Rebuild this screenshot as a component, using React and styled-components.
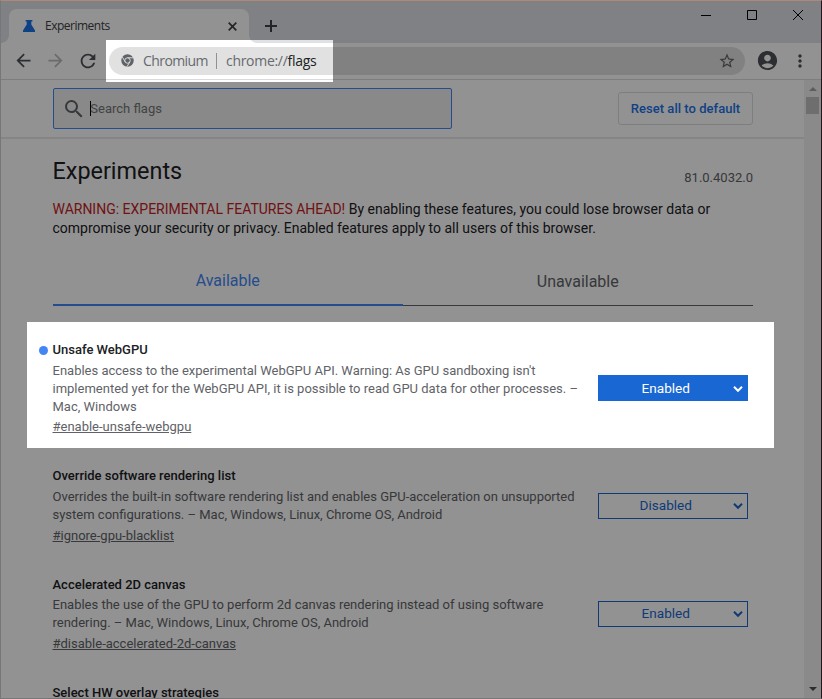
import React from "react";
import styled, { createGlobalStyle } from "styled-components";
import { MdSearch, MdStarBorder, MdAccountCircle, MdMoreVert, MdArrowBack, MdArrowForward, MdRefresh } from "react-icons/md";

const Global = createGlobalStyle`
  body { margin: 0; font-family: Roboto, sans-serif; font-size: 13px; color: #202124; }
  * { box-sizing: border-box; }
`;

const Window = styled.div`
  position: relative;
  width: 822px;
  height: 699px;
  display: flex;
  flex-direction: column;
  overflow: hidden;
  background: #fff;
  border: 1px solid #777;
  border-top-color: #ae8a76;
  border-right-color: #28141c;
`;

/* Dims everything except the address and the first flag. */
const Dimmer = styled.div`
  position: absolute;
  inset: -1px;
  z-index: 5;
  background: rgba(0, 0, 0, 0.427);
  pointer-events: none;
  clip-path: polygon(
    evenodd,
    0 0, 822px 0, 822px 699px, 0 699px, 0 0,
    106px 40px, 333px 40px, 333px 82px, 106px 82px, 106px 40px,
    0 0,
    27px 322px, 774px 322px, 774px 448px, 27px 448px, 27px 322px,
    0 0
  );
`;

const TabStrip = styled.div`
  display: flex;
  flex: none;
  height: 42px;
  background: #dee1e6;
`;

const Tab = styled.div`
  position: relative;
  display: flex;
  align-items: center;
  width: 240px;
  height: 34px;
  margin: 8px 0 0 8px;
  padding: 0 12px 0 14px;
  background: #fff;
  border-radius: 8px 8px 0 0;
  font: 12px/16px "Open Sans", sans-serif;
  letter-spacing: -0.5px;
  color: #3c4043;

  &::before, &::after {
    content: "";
    position: absolute;
    bottom: 0;
    width: 8px;
    height: 8px;
  }
  &::before { left: -8px; background: radial-gradient(circle at 0 0, transparent 7.5px, #fff 8.2px); }
  &::after { right: -8px; background: radial-gradient(circle at 100% 0, transparent 7.5px, #fff 8.2px); }
`;

const TabTitle = styled.span`
  flex: 1;
  margin-left: 10px;
`;

const Icon = styled.svg`
  display: block;
  flex: none;
  overflow: visible;
`;

const NewTab = styled.div`
  margin: 19px 0 0 16px;
`;

const Caption = styled.div`
  display: flex;
  gap: 36px;
  margin: 9px 18px 0 auto;
`;

const Toolbar = styled.div`
  position: relative;
  flex: none;
  display: flex;
  align-items: center;
  height: 37px;
  padding: 0 11px 1px 11px;
  border-bottom: 1px solid #dadada;
`;

const NavButton = styled.div`
  display: flex;
  width: 32px;
  padding-left: ${(p) => (p.$off ? 1 : 0.5)}px;
  color: ${(p) => (p.$off ? "#babcbe" : "#4d5156")};
`;

const Omnibox = styled.div`
  display: flex;
  align-items: center;
  width: 636px;
  height: 28px;
  margin-left: 1px;
  padding: 0 9px 0 11.5px;
  border-radius: 14px;
  background: #e1e1e1;
  font: 14px/20px "Open Sans", sans-serif;
  color: #66696d;
`;

const Origin = styled.span`
  width: 74px;
  margin-left: 9.5px;
  letter-spacing: -0.58px;
  border-right: 1px solid #8f9194;
  line-height: 16px;
`;

const Address = styled.span`
  flex: 1;
  margin-left: 9px;
  letter-spacing: -0.3px;
  b { font-weight: 400; color: #202124; }
`;

const ToolbarEnd = styled.div`
  display: flex;
  align-items: center;
  margin-left: auto;
  gap: 11px;
  color: #4d5156;
`;

const Viewport = styled.div`
  flex: 1;
  min-height: 0;
  display: flex;
`;

const Page = styled.main`
  flex: 1;
  min-width: 0;
  overflow: hidden;
`;

const Header = styled.header`
  display: flex;
  justify-content: space-between;
  align-items: flex-start;
  height: 59px;
  padding: 8px 51px 0 52px;
  border-bottom: 2px solid #e9e9e9;
`;

const Search = styled.div`
  display: flex;
  align-items: center;
  width: 399px;
  height: 41px;
  padding-left: 8px;
  border: 1px solid #4285f4;
  border-radius: 2px;
  background: #edefee;
  color: #5f6368;
`;

const Caret = styled.span`
  width: 1px;
  height: 15px;
  margin: 0 0 1px 4px;
  background: #000;
`;

const Placeholder = styled.span`
  margin: 0 0 1px -0.7px;
  color: #757575;
`;

const Reset = styled.button`
  width: 135px;
  height: 33px;
  margin-top: 4px;
  padding: 0;
  border: 1px solid #dadce0;
  border-radius: 3px;
  background: none;
  font: 500 13px Roboto, sans-serif;
  letter-spacing: 0.03px;
  white-space: nowrap;
  color: #1a73e8;
`;

const Content = styled.div`
  width: 700px;
  margin-left: 52px;
  text-indent: -0.5px;
`;

const TitleRow = styled.div`
  display: flex;
  justify-content: space-between;
  align-items: flex-start;
  height: 61px;
  padding-top: 18px;
`;

const Heading = styled.h1`
  margin: 0;
  font-size: 23.4px;
  font-weight: 400;
  line-height: 28px;
`;

const Version = styled.span`
  margin-top: 12px;
  line-height: 18px;
  color: #5f6368;
`;

const Blurb = styled.p`
  margin: 0;
  font-size: 14px;
  line-height: 19px;
  white-space: nowrap;
  em { font-style: normal; color: #c5221f; }
`;

const BlurbLine = styled.span`
  display: block;
  letter-spacing: ${(p) => p.$tracking || 0}px;
`;

const Tabs = styled.div`
  display: flex;
  height: 49px;
  margin-top: 19px;
`;

const PageTab = styled.div`
  flex: 1;
  padding-top: ${(p) => (p.$active ? 14 : 15)}px;
  text-align: center;
  font-size: 16px;
  line-height: 20px;
  color: ${(p) => (p.$active ? "#4285f4" : "#5f6368")};
  border-bottom: ${(p) => (p.$active ? "2px solid #4285f4" : "1px solid #5f6368")};
`;

const Flags = styled.div`
  padding-top: 35px;
`;

const Flag = styled.section`
  display: flex;
  align-items: flex-start;
  height: ${(p) => p.$height}px;
`;

const FlagText = styled.div`
  position: relative;
  width: 545px;
  line-height: 18px;
  white-space: nowrap;
`;

const Dot = styled.span`
  position: absolute;
  left: -14px;
  top: 5px;
  width: 9px;
  height: 9px;
  border-radius: 50%;
  background: #4285f4;
`;

const FlagName = styled.h2`
  margin: 0;
  font-size: 13px;
  font-weight: 500;
`;

const Description = styled.p`
  margin: ${(p) => p.$gap}px 0 0;
  color: #5f6368;
`;

const DescriptionLine = styled.span`
  display: block;
`;

const Permalink = styled.a`
  display: block;
  margin-top: ${(p) => p.$gap}px;
  color: #5f6368;
  text-decoration: underline;
`;

const Select = styled.div`
  display: flex;
  align-items: center;
  width: 150px;
  height: 26px;
  margin-top: ${(p) => p.$top}px;
  padding: ${(p) => (p.$filled ? "1px" : "0")} 4px ${(p) => (p.$filled ? "0" : "1px")} 0;
  border: 1px solid #1967d2;
  background: ${(p) => (p.$filled ? "#1967d2" : "transparent")};
  color: ${(p) => (p.$filled ? "#fff" : "#1967d2")};
  font-size: 13.6px;
  line-height: 18px;
`;

const SelectValue = styled.span`
  flex: 1;
  margin-bottom: 1px;
  text-align: center;
`;

const Scrollbar = styled.div`
  display: flex;
  flex-direction: column;
  align-items: center;
  width: 17px;
  padding: 7px 0 7px;
  background: #f1f1f1;
`;

const Thumb = styled.div`
  width: 13px;
  height: 17px;
  margin: 6px 0 auto;
  background: #c1c1c1;
`;

const flags = [
  {
    name: "Unsafe WebGPU", height: 126, gap: 3, linkGap: 2, top: 34, changed: true, value: "Enabled",
    lines: ["Enables access to the experimental WebGPU API. Warning: As GPU sandboxing isn't", "implemented yet for the WebGPU API, it is possible to read GPU data for other processes. –", "Mac, Windows"],
    link: "#enable-unsafe-webgpu",
  },
  {
    name: "Override software rendering list", height: 109, gap: 3, linkGap: 3, top: 26, value: "Disabled",
    lines: ["Overrides the built-in software rendering list and enables GPU-acceleration on unsupported", "system configurations. – Mac, Windows, Linux, Chrome OS, Android"],
    link: "#ignore-gpu-blacklist",
  },
  {
    name: "Accelerated 2D canvas", height: 108, gap: 2, linkGap: 3, top: 25, value: "Enabled",
    lines: ["Enables the use of the GPU to perform 2d canvas rendering instead of using software", "rendering. – Mac, Windows, Linux, Chrome OS, Android"],
    link: "#disable-accelerated-2d-canvas",
  },
  { name: "Select HW overlay strategies", height: 18, lines: [] },
];

function ChromiumLogo() {
  return (
    <Icon width="13" height="13" viewBox="0 0 24 24">
      <circle cx="12" cy="12" r="11.5" fill="#5f6368" />
      <circle cx="12" cy="12" r="5" fill="none" stroke="#e1e1e1" strokeWidth="1.7" />
      <path d="M12 7H22.5M7.7 14.5L2.5 5.5M16.3 14.5L11 23.5" stroke="#e1e1e1" strokeWidth="1.7" />
    </Icon>
  );
}

export default function App() {
  return (
    <Window>
      <Global />
      <TabStrip>
        <Tab>
          <Icon width="12" height="12" viewBox="0 0 12 12" fill="#1a73e8">
            <path d="M2.6 0h6.8v1.4H8.3v3.2L12 10.4V12H0v-1.6l3.7-5.8V1.4H2.6z" />
          </Icon>
          <TabTitle>Experiments</TabTitle>
          <Icon width="9" height="9" viewBox="0 0 9 9" stroke="#3c4043" strokeWidth="1.7">
            <path d="M.7.7l7.6 7.6M8.3.7L.7 8.3" />
          </Icon>
        </Tab>
        <NewTab>
          <Icon width="12" height="12" viewBox="0 0 12 12" stroke="#3c4043" strokeWidth="2">
            <path d="M6 0v12M0 6h12" />
          </Icon>
        </NewTab>
        <Caption>
          <Icon width="10" height="10" viewBox="0 0 10 10" stroke="#000"><path d="M0 5.5h10" /></Icon>
          <Icon width="10" height="10" viewBox="0 0 10 10" stroke="#000" fill="none"><path d="M.5.5h9v9h-9z" /></Icon>
          <Icon width="10" height="10" viewBox="0 0 10 10" stroke="#000"><path d="M0 0l10 10M10 0L0 10" /></Icon>
        </Caption>
      </TabStrip>

      <Toolbar>
        <NavButton><MdArrowBack size={21} /></NavButton>
        <NavButton $off><MdArrowForward size={21} /></NavButton>
        <NavButton><MdRefresh size={22} /></NavButton>
        <Omnibox>
          <ChromiumLogo />
          <Origin>Chromium</Origin>
          <Address>chrome://<b>flags</b></Address>
          <MdStarBorder size={18} color="#5f6368" />
        </Omnibox>
        <ToolbarEnd>
          <MdAccountCircle size={23} />
          <MdMoreVert size={20} />
        </ToolbarEnd>
      </Toolbar>

      <Viewport>
        <Page>
          <Header>
            <Search>
              <MdSearch size={24} />
              <Caret />
              <Placeholder>Search flags</Placeholder>
            </Search>
            <Reset>Reset all to default</Reset>
          </Header>
          <Content>
            <TitleRow>
              <Heading>Experiments</Heading>
              <Version>81.0.4032.0</Version>
            </TitleRow>
            <Blurb>
              <BlurbLine>
                <em>WARNING: EXPERIMENTAL FEATURES AHEAD!</em> By enabling these features, you could lose browser data or
              </BlurbLine>
              <BlurbLine $tracking={-0.01}>
                compromise your security or privacy. Enabled features apply to all users of this browser.
              </BlurbLine>
            </Blurb>
            <Tabs>
              <PageTab $active>Available</PageTab>
              <PageTab>Unavailable</PageTab>
            </Tabs>
            <Flags>
              {flags.map((f) => (
                <Flag key={f.name} $height={f.height}>
                  <FlagText>
                    {f.changed && <Dot />}
                    <FlagName>{f.name}</FlagName>
                    {f.link && (
                      <>
                        <Description $gap={f.gap}>
                          {f.lines.map((l) => <DescriptionLine key={l}>{l}</DescriptionLine>)}
                        </Description>
                        <Permalink $gap={f.linkGap}>{f.link}</Permalink>
                      </>
                    )}
                  </FlagText>
                  {f.value && (
                    <Select $filled={f.changed} $top={f.top}>
                      <SelectValue>{f.value}</SelectValue>
                      <Icon width="10" height="6" viewBox="0 0 10 6" fill="none" stroke="currentColor" strokeWidth="2">
                        <path d="M1 .8l4 4 4-4" />
                      </Icon>
                    </Select>
                  )}
                </Flag>
              ))}
            </Flags>
          </Content>
        </Page>
        <Scrollbar>
          <Icon width="8" height="4" viewBox="0 0 8 4"><path d="M0 4l4-4 4 4z" fill="#a3a3a3" /></Icon>
          <Thumb />
          <Icon width="8" height="4" viewBox="0 0 8 4"><path d="M0 0h8L4 4z" fill="#505050" /></Icon>
        </Scrollbar>
      </Viewport>
      <Dimmer />
    </Window>
  );
}
